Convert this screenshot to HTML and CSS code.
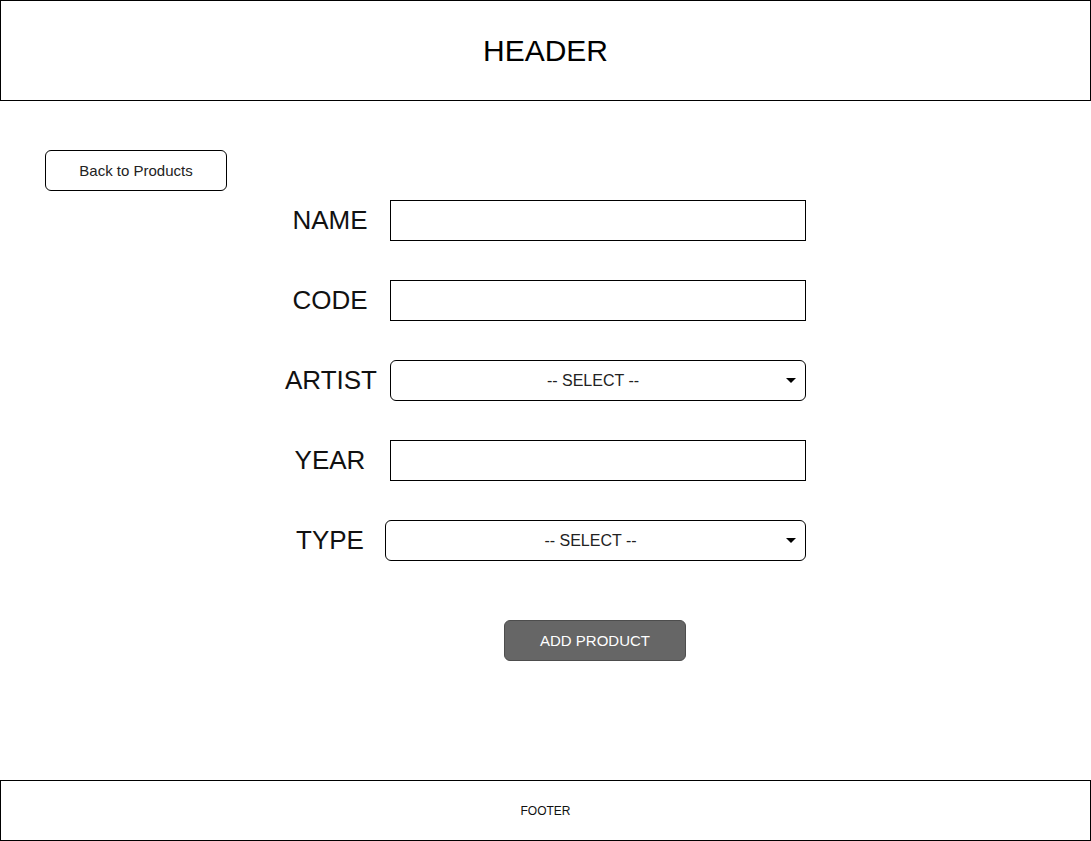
FILE: index.html
```html
<!DOCTYPE html>
<html>
<head>
<meta charset="utf-8">
<link rel="stylesheet" href="styles.css">
</head>
<body>
<div class="page">
  <header class="header">HEADER</header>
  <main class="main">
    <button class="back-btn" type="button">Back to Products</button>
    <form class="form">
      <div class="row">
        <label class="label">NAME</label>
        <input class="field" type="text">
      </div>
      <div class="row">
        <label class="label">CODE</label>
        <input class="field" type="text">
      </div>
      <div class="row">
        <label class="label">ARTIST</label>
        <div class="select-wrap">
          <select class="select"><option>-- SELECT --</option></select>
          <span class="arrow"></span>
        </div>
      </div>
      <div class="row">
        <label class="label">YEAR</label>
        <input class="field" type="text">
      </div>
      <div class="row">
        <label class="label">TYPE</label>
        <div class="select-wrap select-wrap--wide">
          <select class="select"><option>-- SELECT --</option></select>
          <span class="arrow"></span>
        </div>
      </div>
      <div class="actions">
        <button class="add-btn" type="button">ADD PRODUCT</button>
      </div>
    </form>
  </main>
  <footer class="footer">FOOTER</footer>
</div>
</body>
</html>
```
FILE: styles.css
```css
* { box-sizing: border-box; }
html, body { margin: 0; padding: 0; background: #fff; }
body { font-family: "Liberation Sans", Arial, sans-serif; color: #000; }

.page {
  width: 1091px;
  height: 841px;
  display: flex;
  flex-direction: column;
}

.header {
  height: 101px;
  border: 1px solid #000;
  display: flex;
  align-items: center;
  justify-content: center;
  font-size: 30px;
}

.main {
  flex: 1;
  padding: 49px 0 0 45px;
}

.back-btn {
  display: block;
  width: 182px;
  height: 41px;
  border: 1px solid #000;
  border-radius: 6px;
  background: #fff;
  font-family: "Liberation Sans", Arial, sans-serif;
  font-size: 15px;
  color: #222;
  padding: 0;
}

.form {
  margin: 9px 0 0 240px;
  display: flex;
  flex-direction: column;
  gap: 39px;
}

.row {
  display: flex;
  align-items: center;
  height: 41px;
}

.label {
  width: 90px;
  text-align: center;
  font-size: 26px;
  color: #111;
}

.field {
  margin-left: 15px;
  width: 416px;
  height: 41px;
  border: 1px solid #000;
  border-radius: 0;
  outline: none;
  padding: 0 8px;
  background: #fff;
}

.select-wrap {
  position: relative;
  margin-left: 15px;
  width: 416px;
  height: 41px;
}
.select-wrap--wide {
  margin-left: 10px;
  width: 421px;
}

.select {
  appearance: none;
  -webkit-appearance: none;
  width: 100%;
  height: 100%;
  border: 1px solid #000;
  border-radius: 6px;
  background: #fff;
  font-family: "Liberation Sans", Arial, sans-serif;
  font-size: 16px;
  color: #222;
  text-align: center;
  text-align-last: center;
  padding: 0 10px 0 0;
}

.arrow {
  position: absolute;
  right: 10px;
  top: 18px;
  width: 0;
  height: 0;
  border-left: 5px solid transparent;
  border-right: 5px solid transparent;
  border-top: 5px solid #000;
  pointer-events: none;
}

.actions {
  margin-top: 20px;
  padding-left: 219px;
}

.add-btn {
  width: 182px;
  height: 41px;
  border: 1px solid #4d4d4d;
  border-radius: 6px;
  background: #666;
  color: #fff;
  font-family: "Liberation Sans", Arial, sans-serif;
  font-size: 15px;
  padding: 0;
}

.footer {
  height: 61px;
  border: 1px solid #000;
  display: flex;
  align-items: center;
  justify-content: center;
  font-size: 12px;
  color: #111;
}
```
